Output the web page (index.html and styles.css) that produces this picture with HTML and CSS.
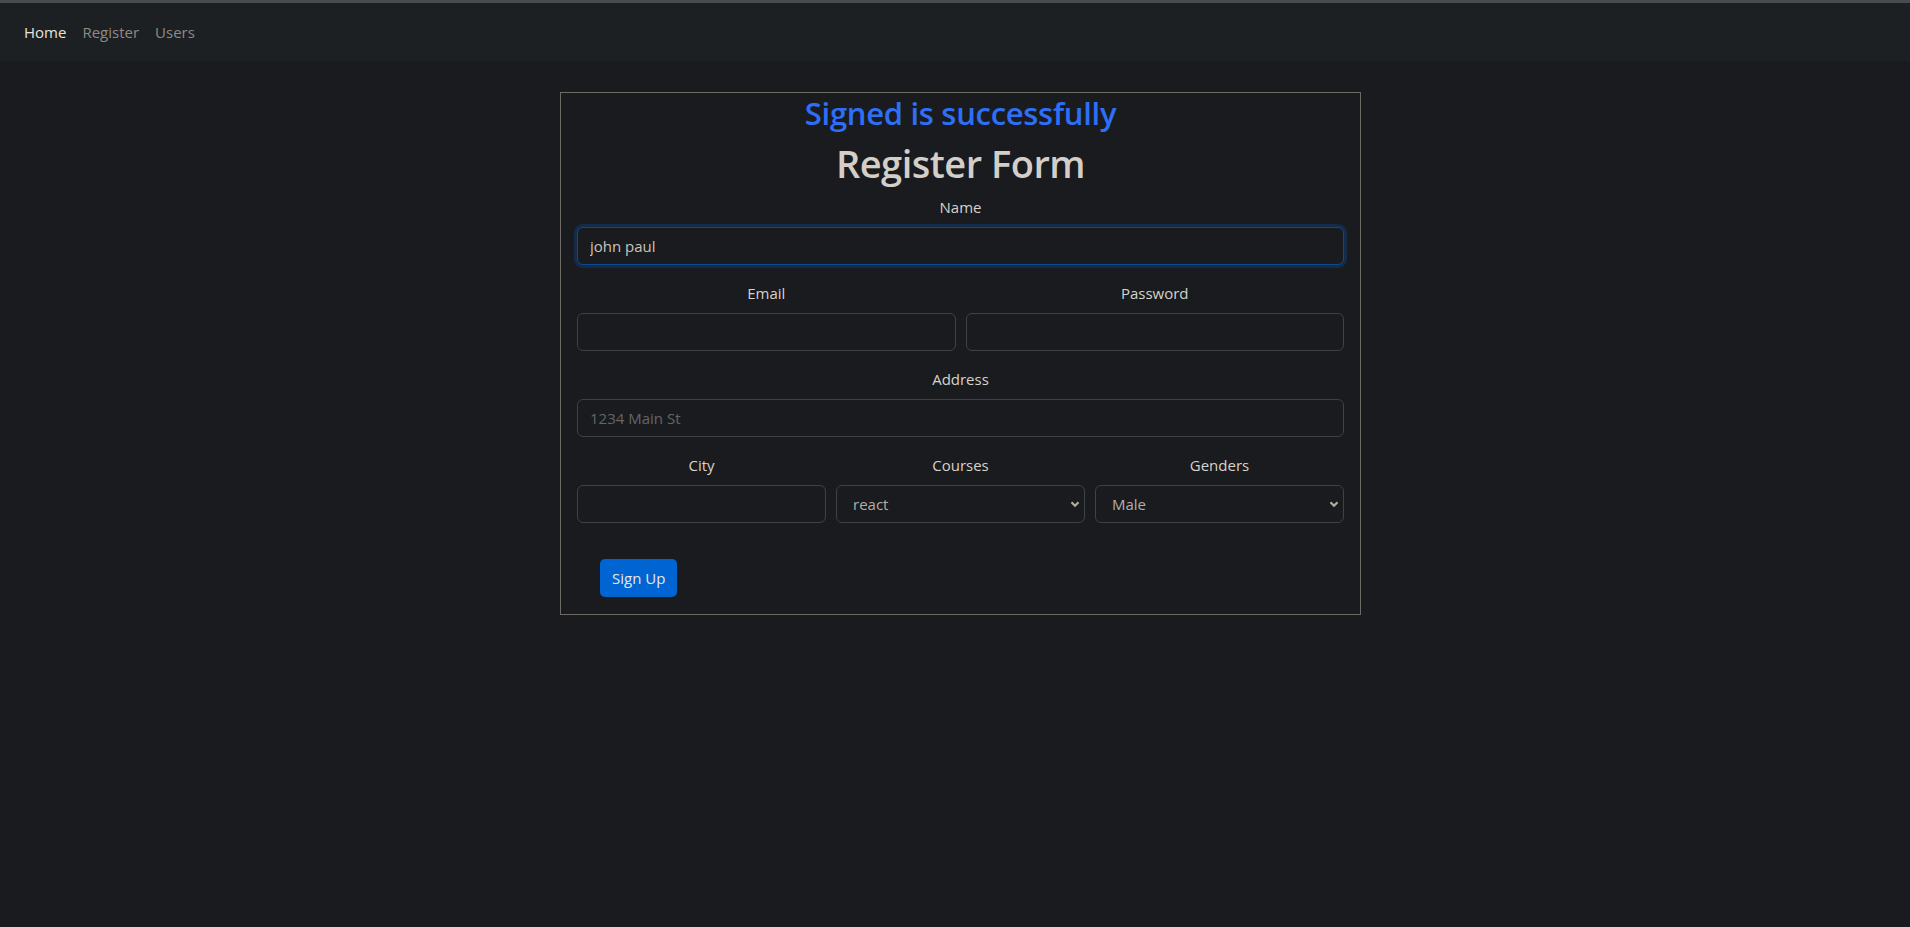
FILE: index.html
```html
<!DOCTYPE html>
<html lang="en">
<head>
    <meta charset="UTF-8">
    <title>Register</title>
    <link rel="stylesheet" href="styles.css">
</head>
<body>
    <nav class="navbar">
        <a href="#" class="nav-link active">Home</a>
        <a href="#" class="nav-link">Register</a>
        <a href="#" class="nav-link">Users</a>
    </nav>

    <div class="form-box">
        <h2 class="success">Signed is successfully</h2>
        <h1 class="title">Register Form</h1>

        <form class="reg-form">
            <div class="field">
                <label for="name">Name</label>
                <input type="text" id="name" class="form-control focused" value="john paul">
            </div>

            <div class="row two">
                <div class="field">
                    <label for="email">Email</label>
                    <input type="email" id="email" class="form-control">
                </div>
                <div class="field">
                    <label for="password">Password</label>
                    <input type="password" id="password" class="form-control">
                </div>
            </div>

            <div class="field">
                <label for="address">Address</label>
                <input type="text" id="address" class="form-control" placeholder="1234 Main St">
            </div>

            <div class="row three">
                <div class="field">
                    <label for="city">City</label>
                    <input type="text" id="city" class="form-control">
                </div>
                <div class="field">
                    <label for="courses">Courses</label>
                    <div class="select-wrap">
                        <select id="courses" class="form-select">
                            <option>react</option>
                            <option>angular</option>
                            <option>vue</option>
                        </select>
                        <svg class="chevron" width="10" height="8" viewBox="0 0 10 8"><path d="M1.5 2.2 5 5.7 8.5 2.2" fill="none" stroke="#b3ada4" stroke-width="2.2"/></svg>
                    </div>
                </div>
                <div class="field">
                    <label for="gender">Genders</label>
                    <div class="select-wrap">
                        <select id="gender" class="form-select">
                            <option>Male</option>
                            <option>Female</option>
                        </select>
                        <svg class="chevron" width="10" height="8" viewBox="0 0 10 8"><path d="M1.5 2.2 5 5.7 8.5 2.2" fill="none" stroke="#b3ada4" stroke-width="2.2"/></svg>
                    </div>
                </div>
            </div>

            <button type="button" class="btn">Sign Up</button>
        </form>
    </div>
</body>
</html>
```

FILE: styles.css
```css
body {
    font-family: "Open Sans", "Noto Sans", sans-serif;
    font-size: 15px;
    line-height: 24px;
    background: #1a1b1e;
    color: #d6d2cc;
    margin: 0;
    padding: 0;
    border-top: 3px solid #4a4b4d;
}

.navbar {
    height: 58px;
    background: #1d2022;
    display: flex;
    align-items: center;
    padding: 0 16px;
}

.nav-link {
    color: #8e8b86;
    text-decoration: none;
    padding: 0 8px;
}

.nav-link.active {
    color: #e6e3df;
}

.form-box {
    width: 767px;
    margin: 31px 0 0 calc(50% - 395px);
    border: 1px solid #6d6965;
    padding: 0 16px 17px;
}

.success {
    margin: 1px 0 7px;
    text-align: center;
    font-size: 31px;
    font-weight: 600;
    line-height: 38px;
    letter-spacing: -0.3px;
    color: #2d6ff6;
}

.title {
    margin: 0 0 8px;
    text-align: center;
    font-size: 38px;
    font-weight: 600;
    line-height: 48px;
    letter-spacing: -0.5px;
    color: #d3cec7;
}

.field {
    display: flex;
    flex-direction: column;
    margin-bottom: 16px;
}

.field label {
    text-align: center;
    margin-bottom: 8px;
    color: #d6d2cc;
}

.row {
    display: grid;
    gap: 10px;
}

.row.two {
    grid-template-columns: 1fr 1fr;
}

.row.three {
    grid-template-columns: 1fr 1fr 1fr;
}

.form-control, .form-select {
    box-sizing: border-box;
    height: 38px;
    width: 100%;
    background: #1a1b1e;
    border: 1px solid #3e4245;
    border-radius: 6px;
    color: #c9c4bd;
    font-family: inherit;
    font-size: 15px;
    padding: 6px 12px;
    outline: none;
}

.form-control::placeholder {
    color: #62666a;
}

.form-control.focused {
    border-color: #0a4a8e;
    box-shadow: 0 0 0 3px rgba(13, 64, 128, 0.45);
}

.select-wrap {
    position: relative;
}

.form-select {
    appearance: none;
    padding-left: 16px;
    color: #b4aea5;
}

.chevron {
    position: absolute;
    right: 5px;
    top: 15px;
    pointer-events: none;
}

.btn {
    margin: 20px 0 0 23px;
    height: 38px;
    padding: 0 12px;
    background-color: #0064d3;
    color: #e8e6e3;
    border: none;
    border-radius: 5px;
    font-family: inherit;
    font-size: 15px;
    cursor: pointer;
}
```
